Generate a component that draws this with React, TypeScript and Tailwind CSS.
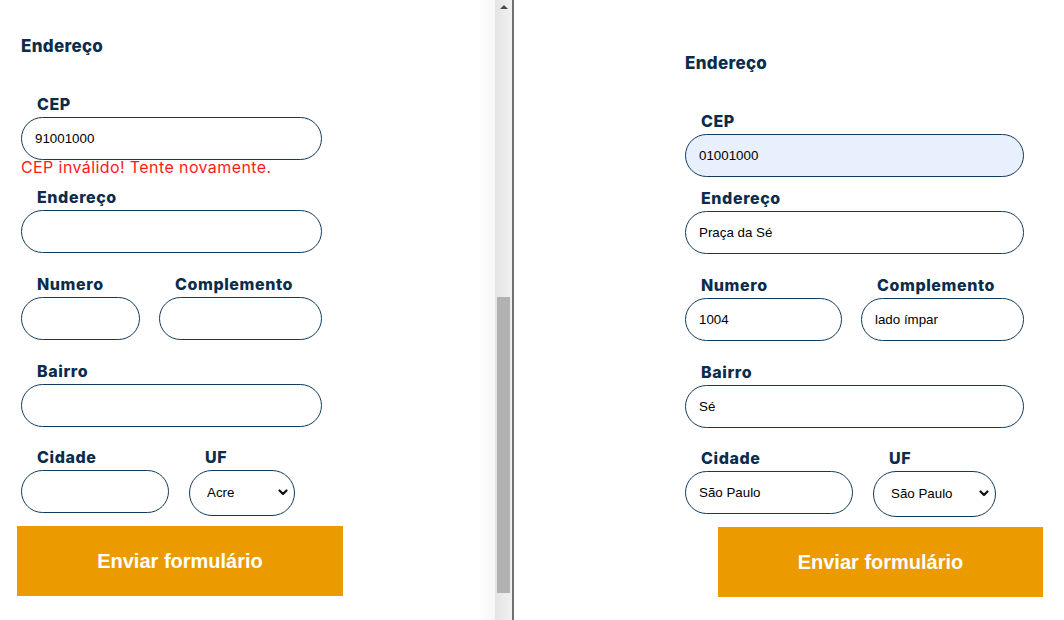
import React from 'react';

const labelCls = "block h-[25px] pl-4 text-[16px] leading-[24px] font-extrabold text-[#0b2c4a] font-['Inter','Open_Sans',sans-serif] tracking-[0.6px]";
const inputCls = "block h-[43px] w-full rounded-full border border-[#123a5c] bg-white px-[13px] text-[13.33px] text-black font-['Liberation_Sans',Arial,sans-serif] outline-none";

interface FieldProps {
  label: string;
  value?: string;
  className?: string;
  autofill?: boolean;
}

const Field: React.FC<FieldProps> = ({ label, value, className, autofill }) => (
  <div className={className}>
    <label className={labelCls}>{label}</label>
    <input
      defaultValue={value}
      className={inputCls + (autofill ? ' !bg-[#e8f0fe]' : '')}
    />
  </div>
);

const UfSelect: React.FC<{ value: string; className?: string }> = ({ value, className }) => (
  <div className={className}>
    <label className={labelCls}>UF</label>
    <div className="relative">
      <select
        defaultValue={value}
        className="block h-[46px] w-full appearance-none rounded-full border border-[#123a5c] bg-white pl-[17px] pr-6 text-[13.33px] text-black font-['Liberation_Sans',Arial,sans-serif] outline-none"
      >
        <option>Acre</option>
        <option>São Paulo</option>
      </select>
      <svg
        className="pointer-events-none absolute right-[7px] top-[19px]"
        width="10"
        height="7"
        viewBox="0 0 10 7"
      >
        <polyline points="1.5,1.5 5,5 8.5,1.5" fill="none" stroke="#111" strokeWidth="2.2" strokeLinecap="round" strokeLinejoin="round" />
      </svg>
    </div>
  </div>
);

const SubmitButton: React.FC<{ className?: string }> = ({ className }) => (
  <button
    className={
      "flex h-[70px] items-center justify-center bg-[#eb9b00] text-[20px] font-bold text-white font-['Liberation_Sans',Arial,sans-serif] " +
      (className ?? '')
    }
  >
    Enviar formulário
  </button>
);

const Heading: React.FC<{ className?: string }> = ({ className }) => (
  <h2 className={"h-[24px] text-[17px] leading-[24px] font-extrabold tracking-[0.3px] text-[#0b2c4a] font-['Inter','Open_Sans',sans-serif] " + (className ?? '')}>
    Endereço
  </h2>
);

const Scrollbar = () => (
  <div className="relative h-full w-[17px] shrink-0 bg-[linear-gradient(to_right,#e4e4e4,#f1f1f1)]">
    <div className="mx-auto mt-[5px] h-0 w-0 border-x-[4px] border-b-[4px] border-x-transparent border-b-[#4a4a4a]" />
    {/* thumb */}
    <div className="absolute left-[2px] top-[297px] h-[296px] w-[13px] bg-[#b2b2b2]" />
  </div>
);

export default function App() {
  return (
    <div className="flex h-[620px] w-[1064px] overflow-hidden bg-white">
      {/* left window */}
      <div className="h-full w-[495px] shrink-0 bg-[linear-gradient(to_right,#fff_478px,#f6f6f6)]">
        <div className="w-[301px] ml-[21px]">
          <Heading className="mt-[34px]" />
          <Field label="CEP" value="91001000" className="mt-[34px]" />
          <p className="-mt-px h-[16px] text-[16px] leading-[16px] tracking-[0.4px] text-[#ff1a1a] font-['Inter','Open_Sans',sans-serif] whitespace-nowrap">
            CEP inválido! Tente novamente.
          </p>
          <Field label="Endereço" className="mt-[10px]" />
          <div className="mt-[19px] flex gap-[19px]">
            <Field label="Numero" className="w-[119px]" />
            <Field label="Complemento" className="w-[163px]" />
          </div>
          <Field label="Bairro" className="mt-[19px]" />
          <div className="mt-[18px] flex gap-[20px]">
            <Field label="Cidade" className="w-[148px]" />
            <UfSelect value="Acre" className="w-[106px]" />
          </div>
        </div>
        <SubmitButton className="mt-[10px] ml-[17px] w-[326px]" />
      </div>

      <Scrollbar />
      <div className="h-full w-[2px] shrink-0 bg-[#707070]" />

      {/* right window */}
      <div className="h-full flex-1">
        <div className="ml-[171px] w-[339px]">
          <Heading className="mt-[51px]" />
          <Field label="CEP" value="01001000" className="mt-[34px]" autofill />
          <Field label="Endereço" value="Praça da Sé" className="mt-[9px]" />
          <div className="mt-[19px] flex gap-[19px]">
            <Field label="Numero" value="1004" className="w-[157px]" />
            <Field label="Complemento" value="lado ímpar" className="w-[163px]" />
          </div>
          <Field label="Bairro" value="Sé" className="mt-[19px]" />
          <div className="mt-[18px] flex gap-[20px]">
            <Field label="Cidade" value="São Paulo" className="w-[168px]" />
            <UfSelect value="São Paulo" className="w-[123px]" />
          </div>
        </div>
        <SubmitButton className="mt-[10px] ml-[204px] w-[325px]" />
      </div>
    </div>
  );
}
